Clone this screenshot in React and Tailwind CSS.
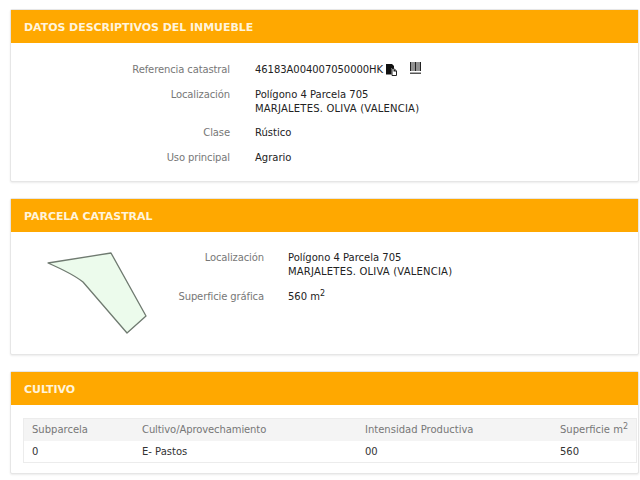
import React from 'react';

const Card = ({ title, className, bodyClass, children }) => (
  <section className={`rounded-[2px] border border-[#e6e6e6] bg-white shadow-[0_1px_2px_rgba(0,0,0,0.08)] ${className}`}>
    <h2 className="flex h-[33px] items-center bg-[#ffa800] pl-[13px] pt-[3px] text-[11px] font-bold tracking-[-0.05px] text-[#fff4dc]">{title}</h2>
    <div className={bodyClass}>{children}</div>
  </section>
);

const Row = ({ label, children, className }) => (
  <>
    <dt className={`text-right tracking-[-0.12px] text-[#777777] ${className}`}>{label}</dt>
    <dd className={`leading-[14px] text-[#222222] ${className}`}>{children}</dd>
  </>
);

const Address = () => (
  <>
    <div>Polígono 4 Parcela 705</div>
    <div className="tracking-[0.2px]">MARJALETES. OLIVA (VALENCIA)</div>
  </>
);

const CopyIcon = () => (
  <svg width="11" height="12" viewBox="0 0 11 12" className="shrink-0">
    <path d="M0 0h6l2 2v2H5.500v6.500H0z" fill="#111111" />
    <path d="M6 4.500h2l2.500 2.500v4.500H6z" fill="#ffffff" stroke="#222222" strokeWidth="1" />
    <path d="M7.500 4.500v3h3z" fill="#222222" />
  </svg>
);

const BarcodeIcon = () => (
  <svg width="11" height="13" viewBox="0 0 11 13" className="shrink-0">
    <path d="M0 0h1.500v9H0zM2.500 0h1v9h-1zM4.500 0h2v9h-2zM7.500 0h1v9h-1zM9.500 0h1.500v9H9.500z" fill="#222222" />
    <path d="M0 10.500h11V12H0z" fill="#555555" />
  </svg>
);

const columns = 'grid grid-cols-[110px_223px_195px_1fr]';

export default function App() {
  return (
    <div className="flex w-[640px] flex-col gap-[16px] bg-white pb-[5px] pl-[10px] pr-[1px] pt-[9px] font-['DejaVu_Sans',sans-serif] text-[10px]">
      <Card title="DATOS DESCRIPTIVOS DEL INMUEBLE" className="h-[173px]" bodyClass="pt-[20px]">
        <dl className="grid grid-cols-[219px_1fr] gap-x-[25px] leading-[14px]">
          <Row label="Referencia catastral" className="mb-[11px]">
            <span className="flex items-center">
              <span className="tracking-[-0.05px]">46183A004007050000HK</span>
              <span className="ml-[3px]"><CopyIcon /></span>
              <span className="ml-[13px] -mt-[3px]"><BarcodeIcon /></span>
            </span>
          </Row>
          <Row label="Localización" className="mb-[10px]"><Address /></Row>
          <Row label="Clase" className="mb-[11px]">Rústico</Row>
          <Row label="Uso principal">Agrario</Row>
        </dl>
      </Card>

      <Card title="PARCELA CATASTRAL" className="h-[157px]" bodyClass="relative h-[122px] pt-[19px]">
        <svg width="100" height="82" viewBox="0 0 100 82" className="absolute left-[36px] top-[20px]">
          <path
            d="M1 11 L64 1 L99 64 L80 81 L36 30 Q26 22 1 11 Z"
            fill="#ecfbec"
            stroke="#6f7a70"
            strokeWidth="1.300"
            strokeLinejoin="round"
          />
        </svg>
        <dl className="grid grid-cols-[253px_1fr] gap-x-[24px] leading-[14px]">
          <Row label="Localización" className="mb-[11px]"><Address /></Row>
          <Row label="Superficie gráfica">
            560 m<sup className="text-[8px] leading-none">2</sup>
          </Row>
        </dl>
      </Card>

      <Card title="CULTIVO" className="h-[103px]" bodyClass="pl-[12px] pr-[1px] pt-[13px]">
        <div className="border border-[#ececec] leading-[14px]">
          <div className={`${columns} h-[22px] items-center bg-[#f4f4f4] pl-[8px] text-[#777777]`}>
            <span>Subparcela</span>
            <span className="tracking-[-0.1px]">Cultivo/Aprovechamiento</span>
            <span>Intensidad Productiva</span>
            <span className="whitespace-nowrap">Superficie m<sup className="text-[8px] leading-none">2</sup></span>
          </div>
          <div className={`${columns} h-[21px] items-center bg-white pl-[8px] text-[#333333]`}>
            <span>0</span>
            <span>E- Pastos</span>
            <span>00</span>
            <span>560</span>
          </div>
        </div>
      </Card>
    </div>
  );
}
